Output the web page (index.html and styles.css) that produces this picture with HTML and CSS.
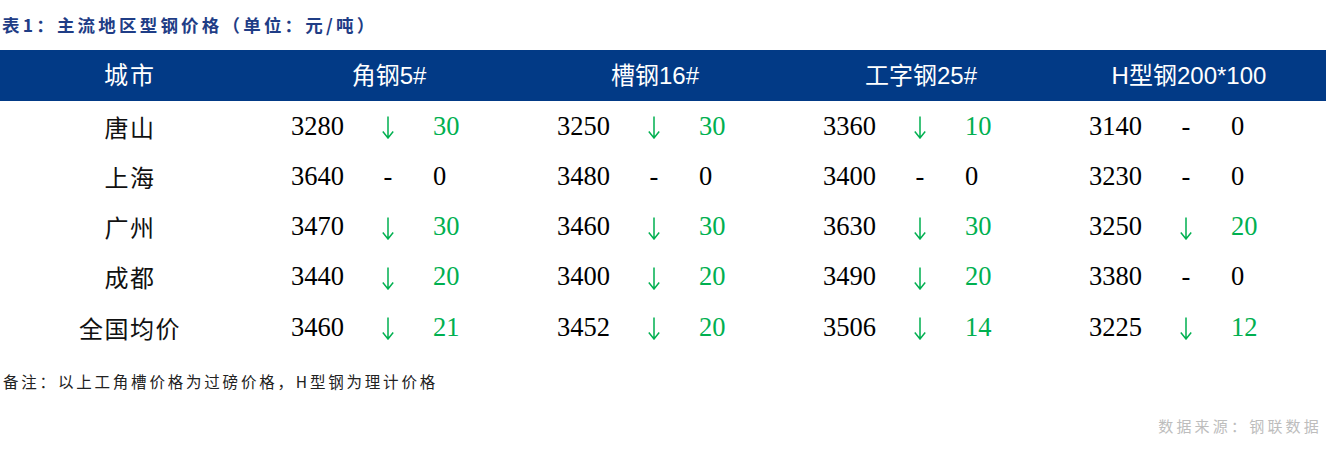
FILE: index.html
```html
<!DOCTYPE html>
<html lang="zh">
<head>
<meta charset="utf-8">
<link rel="stylesheet" href="styles.css">
</head>
<body>
<svg class="defs" width="0" height="0" aria-hidden="true">
  <symbol id="down" viewBox="0 0 12 23">
    <path d="M6 0.5 V22 M0.8 15.5 L6 22 L11.2 15.5" fill="none" stroke="currentColor" stroke-width="1.5" stroke-linejoin="miter"/>
  </symbol>
</svg>
<div class="page">
  <div class="title">表1：主流地区型钢价格（单位：元/吨）</div>
  <div class="table">
    <div class="row head">
      <div class="hcity">城市</div>
      <div class="hgroup">角钢5#</div>
      <div class="hgroup">槽钢16#</div>
      <div class="hgroup">工字钢25#</div>
      <div class="hgroup">H型钢200*100</div>
    </div>
    <div class="row">
      <div class="city">唐山</div>
      <div class="price">3280</div><div class="dir down"><svg class="arrow"><use href="#down"/></svg></div><div class="chg down">30</div>
      <div class="price">3250</div><div class="dir down"><svg class="arrow"><use href="#down"/></svg></div><div class="chg down">30</div>
      <div class="price">3360</div><div class="dir down"><svg class="arrow"><use href="#down"/></svg></div><div class="chg down">10</div>
      <div class="price">3140</div><div class="dir">-</div><div class="chg">0</div>
    </div>
    <div class="row">
      <div class="city">上海</div>
      <div class="price">3640</div><div class="dir">-</div><div class="chg">0</div>
      <div class="price">3480</div><div class="dir">-</div><div class="chg">0</div>
      <div class="price">3400</div><div class="dir">-</div><div class="chg">0</div>
      <div class="price">3230</div><div class="dir">-</div><div class="chg">0</div>
    </div>
    <div class="row">
      <div class="city">广州</div>
      <div class="price">3470</div><div class="dir down"><svg class="arrow"><use href="#down"/></svg></div><div class="chg down">30</div>
      <div class="price">3460</div><div class="dir down"><svg class="arrow"><use href="#down"/></svg></div><div class="chg down">30</div>
      <div class="price">3630</div><div class="dir down"><svg class="arrow"><use href="#down"/></svg></div><div class="chg down">30</div>
      <div class="price">3250</div><div class="dir down"><svg class="arrow"><use href="#down"/></svg></div><div class="chg down">20</div>
    </div>
    <div class="row">
      <div class="city">成都</div>
      <div class="price">3440</div><div class="dir down"><svg class="arrow"><use href="#down"/></svg></div><div class="chg down">20</div>
      <div class="price">3400</div><div class="dir down"><svg class="arrow"><use href="#down"/></svg></div><div class="chg down">20</div>
      <div class="price">3490</div><div class="dir down"><svg class="arrow"><use href="#down"/></svg></div><div class="chg down">20</div>
      <div class="price">3380</div><div class="dir">-</div><div class="chg">0</div>
    </div>
    <div class="row">
      <div class="city">全国均价</div>
      <div class="price">3460</div><div class="dir down"><svg class="arrow"><use href="#down"/></svg></div><div class="chg down">21</div>
      <div class="price">3452</div><div class="dir down"><svg class="arrow"><use href="#down"/></svg></div><div class="chg down">20</div>
      <div class="price">3506</div><div class="dir down"><svg class="arrow"><use href="#down"/></svg></div><div class="chg down">14</div>
      <div class="price">3225</div><div class="dir down"><svg class="arrow"><use href="#down"/></svg></div><div class="chg down">12</div>
    </div>
  </div>
  <div class="note">备注：以上工角槽价格为过磅价格，H型钢为理计价格</div>
  <div class="source">数据来源：钢联数据</div>
</div>
</body>
</html>
```
FILE: styles.css
```css
html, body {
  margin: 0;
  padding: 0;
  background: #ffffff;
}
.defs {
  position: absolute;
  width: 0;
  height: 0;
  overflow: hidden;
}
.page {
  width: 1326px;
  height: 453px;
  display: flex;
  flex-direction: column;
  font-family: "Liberation Serif", "Noto Sans CJK SC", serif;
}
.title {
  height: 50px;
  box-sizing: border-box;
  padding: 13px 0 0 2px;
  font-family: "Noto Sans CJK SC", sans-serif;
  font-weight: 700;
  font-size: 17.5px;
  line-height: 24px;
  letter-spacing: 3.2px;
  color: #1f3d86;
}
.table {
  display: flex;
  flex-direction: column;
}
.row {
  display: grid;
  grid-template-columns: 258px repeat(3, 97px 66px 103px) 97px 66px 107px;
  height: 50.25px;
  align-items: center;
}
.row.head {
  grid-template-columns: 258px repeat(3, 266px) 270px;
  height: 51px;
  background: #023a86;
  color: #ffffff;
  font-family: "Liberation Sans", "Noto Sans CJK SC", sans-serif;
  font-size: 24px;
}
.hcity, .hgroup {
  text-align: center;
  line-height: 30px;
}
.hcity {
  letter-spacing: 2px;
  padding-left: 2px;
}
.hgroup {
  padding-right: 4px;
}
.city {
  text-align: center;
  font-family: "Noto Sans CJK SC", sans-serif;
  font-size: 24px;
  letter-spacing: 1.5px;
  padding-left: 2px;
  color: #111;
}
.price {
  padding-left: 33px;
  font-size: 26.5px;
  color: #000;
}
.dir {
  display: flex;
  justify-content: center;
  align-items: center;
  font-size: 26.5px;
  color: #000;
}
.dir.down {
  color: #00b050;
  padding-top: 3px;
}
.arrow {
  width: 12px;
  height: 23px;
}
.chg {
  padding-left: 12px;
  font-size: 26.5px;
  color: #000;
}
.chg.down {
  color: #00b050;
}
.note {
  margin-top: 17px;
  padding-left: 3px;
  font-family: "Noto Sans CJK SC", sans-serif;
  font-size: 15.5px;
  line-height: 24px;
  letter-spacing: 2.8px;
  color: #222;
}
.source {
  margin-top: 23px;
  align-self: flex-end;
  padding-right: 4px;
  font-family: "Noto Sans CJK SC", sans-serif;
  font-size: 15px;
  line-height: 20px;
  letter-spacing: 3.2px;
  color: #bdbdbd;
}
```
